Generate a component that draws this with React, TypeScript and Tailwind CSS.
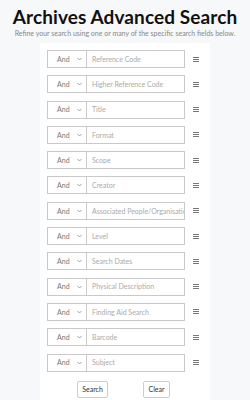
const fields = [
  "Reference Code",
  "Higher Reference Code",
  "Title",
  "Format",
  "Scope",
  "Creator",
  "Associated People/Organisations",
  "Level",
  "Search Dates",
  "Physical Description",
  "Finding Aid Search",
  "Barcode",
  "Subject",
];

function Row({ label }: { label: string }) {
  return (
    <div className="flex items-center h-[18px]">
      <div className="flex h-full w-[40px] items-center justify-between border border-[#c9c9c9] bg-white pl-[9px] pr-[4px] text-[7px] text-[#777]">
        <span>And</span>
        <svg width="5" height="4" viewBox="0 0 5 4" className="text-[#888]">
          <path d="M0.5 1 L2.5 3 L4.5 1" fill="none" stroke="currentColor" strokeWidth="0.8" />
        </svg>
      </div>
      <div className="flex h-full w-[98px] items-center overflow-hidden whitespace-nowrap border border-l-0 border-[#c9c9c9] bg-white pl-[5px] text-[7px] text-[#aaa]">
        {label}
      </div>
      <div className="ml-[8px] flex w-[6px] flex-col gap-[1px]">
        <span className="h-[1px] bg-[#777]" />
        <span className="h-[1px] bg-[#777]" />
        <span className="h-[1px] bg-[#777]" />
      </div>
    </div>
  );
}

export default function App() {
  return (
    <main className="min-h-[400px] w-[250px] overflow-hidden bg-[#f7f8fa] font-['Lato',sans-serif]">
      <h1 className="whitespace-nowrap pt-[5px] text-center text-[19px] font-bold leading-[24px] tracking-[0.1px] text-[#111]">
        Archives Advanced Search
      </h1>
      <p className="whitespace-nowrap text-center text-[7px] leading-[9px] text-[#888]">
        Refine your search using one or many of the specific search fields below.
      </p>
      <section className="mx-auto mt-[5px] w-[170px] bg-white pl-[7px] pt-[7px] pb-[3px]">
        <div className="flex flex-col gap-[7.3px]">
          {fields.map((f) => (
            <Row key={f} label={f} />
          ))}
        </div>
        <div className="mt-[9px] flex pl-[30px] gap-[35px]">
          <button className="h-[17px] w-[31px] rounded-[2px] border border-[#b9d3e6] bg-white text-[7px] text-[#333]">
            Search
          </button>
          <button className="h-[17px] w-[27px] rounded-[2px] border border-[#b9d3e6] bg-white text-[7px] text-[#333]">
            Clear
          </button>
        </div>
      </section>
    </main>
  );
}
